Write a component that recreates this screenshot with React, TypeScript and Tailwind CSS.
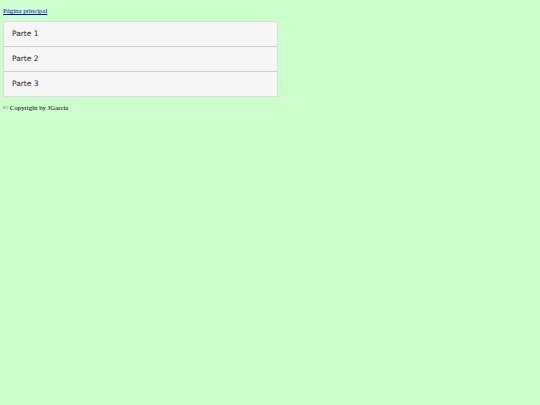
import React from "react";

export default function App() {
  const items = ["Parte 1", "Parte 2", "Parte 3"];
  return (
    <div className="min-h-[405px] w-full bg-[#ccffcc] px-[3px] pt-[6px] font-['Liberation_Serif',serif] text-[6.8px] text-black">
      <a href="#" className="text-[#0000ee] underline leading-[9px] block">
        Página principal
      </a>
      <div className="mt-[6px] w-[275px] border border-[#dddddd] bg-[#f6f6f6]">
        {items.map((t, i) => (
          <div
            key={t}
            className={`flex items-center pl-[8px] font-['DejaVu_Sans',sans-serif] text-[7.5px] text-[#222] ${i > 0 ? "h-[25px] border-t border-[#cccccc]" : "h-[24px]"}`}
          >
            {t}
          </div>
        ))}
      </div>
      <div className="mt-[6px] leading-[9px]">© Copyright by JGarcia</div>
    </div>
  );
}
